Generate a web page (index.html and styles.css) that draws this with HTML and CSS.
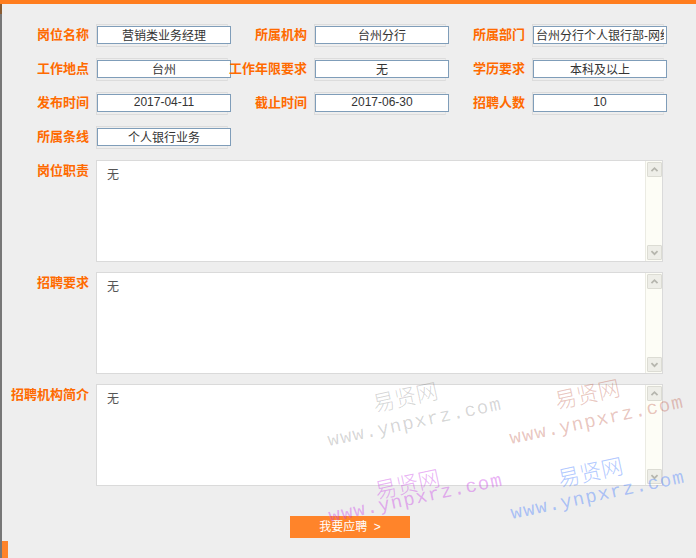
FILE: index.html
```html
<!DOCTYPE html>
<html lang="zh-CN">
<head>
<meta charset="utf-8">
<title>岗位详情</title>
<link rel="stylesheet" href="styles.css">
</head>
<body>
<div class="topbar"></div>
<div class="page">
  <div class="edge"></div>
  <main class="main">
    <div class="grid">
      <div class="lbl">岗位名称</div><div class="cell"><input class="inp" value="营销类业务经理" readonly></div>
      <div class="lbl">所属机构</div><div class="cell"><input class="inp" value="台州分行" readonly></div>
      <div class="lbl">所属部门</div><div class="cell"><input class="inp" value="台州分行个人银行部-网络金融部" readonly></div>

      <div class="lbl">工作地点</div><div class="cell"><input class="inp" value="台州" readonly></div>
      <div class="lbl">工作年限要求</div><div class="cell"><input class="inp" value="无" readonly></div>
      <div class="lbl">学历要求</div><div class="cell"><input class="inp" value="本科及以上" readonly></div>

      <div class="lbl">发布时间</div><div class="cell"><input class="inp" value="2017-04-11" readonly></div>
      <div class="lbl">截止时间</div><div class="cell"><input class="inp" value="2017-06-30" readonly></div>
      <div class="lbl">招聘人数</div><div class="cell"><input class="inp" value="10" readonly></div>

      <div class="lbl">所属条线</div><div class="cell"><input class="inp" value="个人银行业务" readonly></div>
    </div>

    <div class="areas">
      <div class="arow">
        <div class="lbl alb">岗位职责</div>
        <div class="ta">
          <div class="ta-text">无</div>
          <div class="sb">
            <div class="sbtn"><svg width="15" height="13" viewBox="0 0 15 13"><path d="M4 8.5 L7.5 5 L11 8.5" stroke="#b6b6ae" stroke-width="2" fill="none"/></svg></div>
            <div class="strack"></div>
            <div class="sbtn"><svg width="15" height="13" viewBox="0 0 15 13"><path d="M4 5 L7.5 8.5 L11 5" stroke="#b6b6ae" stroke-width="2" fill="none"/></svg></div>
          </div>
        </div>
      </div>
      <div class="arow">
        <div class="lbl alb">招聘要求</div>
        <div class="ta">
          <div class="ta-text">无</div>
          <div class="sb">
            <div class="sbtn"><svg width="15" height="13" viewBox="0 0 15 13"><path d="M4 8.5 L7.5 5 L11 8.5" stroke="#b6b6ae" stroke-width="2" fill="none"/></svg></div>
            <div class="strack"></div>
            <div class="sbtn"><svg width="15" height="13" viewBox="0 0 15 13"><path d="M4 5 L7.5 8.5 L11 5" stroke="#b6b6ae" stroke-width="2" fill="none"/></svg></div>
          </div>
        </div>
      </div>
      <div class="arow">
        <div class="lbl alb">招聘机构简介</div>
        <div class="ta">
          <div class="ta-text">无</div>
          <div class="sb">
            <div class="sbtn"><svg width="15" height="13" viewBox="0 0 15 13"><path d="M4 8.5 L7.5 5 L11 8.5" stroke="#b6b6ae" stroke-width="2" fill="none"/></svg></div>
            <div class="strack"></div>
            <div class="sbtn"><svg width="15" height="13" viewBox="0 0 15 13"><path d="M4 5 L7.5 8.5 L11 5" stroke="#b6b6ae" stroke-width="2" fill="none"/></svg></div>
          </div>
        </div>
      </div>
    </div>

    <div class="actions"><button class="btn" type="button">我要应聘&nbsp;&nbsp;&gt;</button></div>
    <div class="foot"></div>
  </main>
</div>

<div class="wm" aria-hidden="true">
  <span class="wm-cn wm-gray" style="left:375px;top:391px">易贤网</span>
  <span class="wm-url wm-gray" style="left:330px;top:432px">www.ynpxrz.com</span>
  <span class="wm-cn wm-red" style="left:557px;top:388px">易贤网</span>
  <span class="wm-url wm-red" style="left:512px;top:430px">www.ynpxrz.com</span>
  <span class="wm-cn wm-violet" style="left:377px;top:478px">易贤网</span>
  <span class="wm-url wm-violet" style="left:331px;top:508px">www.ynpxrz.com</span>
  <span class="wm-cn wm-blue" style="left:560px;top:466px">易贤网</span>
  <span class="wm-url wm-blue" style="left:513px;top:505px">www.ynpxrz.com</span>
</div>
</body>
</html>
```

FILE: styles.css
```css
html, body {
  margin: 0;
  padding: 0;
  height: 100%;
  overflow: hidden;
}
body {
  background: #eeeeee;
  font-family: "Liberation Sans", "Noto Sans CJK SC", sans-serif;
  font-size: 12px;
  color: #333;
  position: relative;
}
.topbar {
  height: 4px;
  background: #ff7d1e;
}
.page {
  display: flex;
  min-height: 554px;
}
.edge {
  width: 2px;
  flex: none;
  background: linear-gradient(#8a5c32 0 10px, #777777 10px);
}
.main {
  flex: 1;
}
.grid {
  display: grid;
  grid-template-columns: 86px 132px 86px 132px 86px 132px;
  row-gap: 11px;
  align-items: center;
  padding: 20px 0 0 8px;
}
.lbl {
  font-family: "Noto Sans CJK SC", sans-serif;
  font-weight: bold;
  font-size: 13px;
  line-height: 18px;
  color: #ff6a00;
  text-align: right;
  padding-right: 7px;
  padding-bottom: 3px;
  white-space: nowrap;
}
.cell {
  height: 21px;
  border: 1px solid #dcdcdc;
  border-right-color: #e4e4e4;
}
.inp {
  display: block;
  box-sizing: border-box;
  width: 134px;
  height: 18px;
  margin: 1px 0 0 0;
  padding: 0 2px 2px;
  border: 1px solid #7f9db9;
  background: #fff;
  font-family: "Liberation Sans", "Noto Sans CJK SC", sans-serif;
  font-size: 12px;
  line-height: 14px;
  color: #333;
  text-align: center;
  outline: none;
}
.areas {
  display: flex;
  flex-direction: column;
  gap: 10px;
  padding: 11px 0 0 8px;
}
.arow {
  display: flex;
  align-items: flex-start;
}
.alb {
  width: 86px;
  box-sizing: border-box;
  padding-top: 1px;
  padding-bottom: 0;
}
.ta {
  width: 567px;
  height: 102px;
  box-sizing: border-box;
  border: 1px solid #dadada;
  background: #fff;
  display: flex;
}
.ta-text {
  flex: 1;
  padding: 5px 10px;
  font-family: "Noto Sans CJK SC", sans-serif;
  font-size: 12px;
  line-height: 16px;
  color: #555;
}
.sb {
  width: 17px;
  flex: none;
  box-sizing: border-box;
  border-left: 1px solid #ebebe3;
  background: #fdfdf6;
  padding: 1px 0 1px 1px;
  display: flex;
  flex-direction: column;
}
.sbtn {
  height: 15px;
  box-sizing: border-box;
  border: 1px solid #dcdcd4;
  border-radius: 1px;
  background: #eeeee8;
  display: flex;
  align-items: center;
  justify-content: center;
}
.sbtn svg {
  display: block;
}
.strack {
  flex: 1;
}
.actions {
  display: flex;
  justify-content: center;
  padding-left: 2px;
  margin-top: 30px;
}
.btn {
  width: 120px;
  height: 22px;
  border: none;
  padding: 0;
  background: #ff842a;
  color: #fff;
  font-family: "Liberation Sans", "Noto Sans CJK SC", sans-serif;
  font-size: 12px;
  line-height: 22px;
  cursor: pointer;
}
.foot {
  width: 6px;
  height: 17px;
  margin-top: 3px;
  background: #ff842a;
}
.wm {
  position: absolute;
  left: 0;
  top: 0;
  width: 100%;
  height: 100%;
  pointer-events: none;
}
.wm span {
  position: absolute;
  white-space: nowrap;
  line-height: 1;
  transform: rotate(-12deg);
  transform-origin: 0 100%;
}
.wm-cn {
  font-family: "Noto Sans CJK SC", sans-serif;
  font-weight: 300;
  font-size: 22px;
}
.wm-url {
  font-family: "Liberation Mono", monospace;
  font-size: 19px;
  letter-spacing: 1.3px;
}
.wm-gray { color: rgba(0, 0, 0, 0.17); }
.wm-red { color: rgba(180, 60, 40, 0.3); }
.wm-violet { color: rgba(200, 60, 230, 0.4); }
.wm-blue { color: rgba(60, 120, 255, 0.4); }
```
